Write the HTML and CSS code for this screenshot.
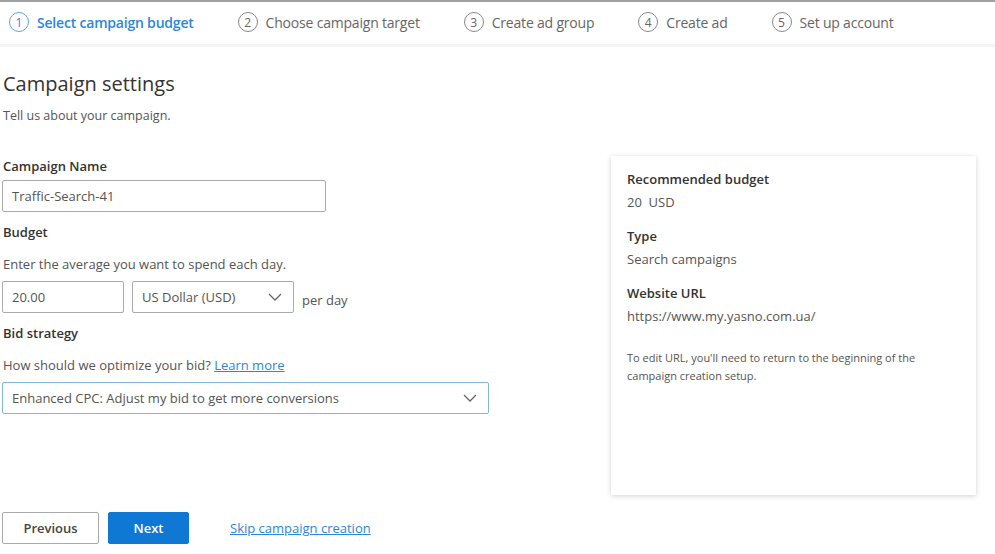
FILE: index.html
```html
<!DOCTYPE html>
<html lang="en">
<head>
  <meta charset="UTF-8">
  <meta name="viewport" content="width=device-width, initial-scale=1.0">
  <title>Campaign settings</title>
  <link rel="stylesheet" href="styles.css">
</head>
<body>
  <div class="steps">
    <div class="step active"><span class="num">1</span>Select campaign budget</div>
    <div class="step"><span class="num">2</span>Choose campaign target</div>
    <div class="step"><span class="num">3</span>Create ad group</div>
    <div class="step"><span class="num">4</span>Create ad</div>
    <div class="step"><span class="num">5</span>Set up account</div>
  </div>

  <div class="page">
    <div class="form">
      <h1>Campaign settings</h1>
      <p class="sub">Tell us about your campaign.</p>

      <label class="label first">Campaign Name</label>
      <div class="field name-field">Traffic-Search-41</div>

      <label class="label">Budget</label>
      <p class="hint">Enter the average you want to spend each day.</p>
      <div class="budget-row">
        <div class="field amount">20.00</div>
        <div class="field select currency">US Dollar (USD)
          <svg class="chev" width="14" height="8" viewBox="0 0 14 8"><path d="M1 1l6 6 6-6" fill="none" stroke="#666" stroke-width="1.3"/></svg>
        </div>
        <span class="per-day">per day</span>
      </div>

      <label class="label">Bid strategy</label>
      <p class="hint">How should we optimize your bid? <a href="#">Learn more</a></p>
      <div class="field select bid">Enhanced CPC: Adjust my bid to get more conversions
        <svg class="chev" width="14" height="8" viewBox="0 0 14 8"><path d="M1 1l6 6 6-6" fill="none" stroke="#666" stroke-width="1.3"/></svg>
      </div>
    </div>

    <div class="card">
      <div class="card-title">Recommended budget</div>
      <div class="card-value">20&nbsp; USD</div>
      <div class="card-title">Type</div>
      <div class="card-value">Search campaigns</div>
      <div class="card-title">Website URL</div>
      <div class="card-value">https://www.my.yasno.com.ua/</div>
      <p class="card-note">To edit URL, you'll need to return to the beginning of the campaign creation setup.</p>
    </div>
  </div>

  <div class="actions">
    <button class="btn">Previous</button>
    <button class="btn primary">Next</button>
    <a href="#" class="skip">Skip campaign creation</a>
  </div>
</body>
</html>
```

FILE: styles.css
```css
body {
  margin: 0;
  font-family: "Open Sans", "Noto Sans", sans-serif;
  color: #333;
  background: #fff;
}
.steps {
  display: flex;
  align-items: center;
  height: 40px;
  padding: 0 0 2px 9px;
  border-top: 2px solid #a0a0a0;
  border-bottom: 3px solid #f4f4f4;
}
.step {
  display: flex;
  align-items: center;
  font-size: 14px;
  color: #666;
  margin-right: 44px;
  letter-spacing: -0.2px;
}
.step .num {
  width: 18px;
  height: 18px;
  border: 1.5px solid #888;
  border-radius: 50%;
  display: flex;
  align-items: center;
  justify-content: center;
  font-size: 12px;
  margin-right: 8px;
  letter-spacing: 0;
}
.step.active {
  color: #2b88d8;
  font-weight: 600;
}
.step.active .num {
  border-color: #5aa6dc;
  font-weight: 400;
}
.page {
  display: flex;
  align-items: flex-start;
}
.form {
  width: 490px;
  padding-left: 2px;
}
h1 {
  font-size: 20px;
  font-weight: 500;
  color: #333;
  margin: 23px 0 0 1px;
  line-height: 28px;
}
.sub {
  font-size: 12.5px;
  color: #555;
  margin: 9px 0 0 1px;
}
.label {
  display: block;
  font-size: 13px;
  font-weight: 600;
  color: #333;
  margin: 11px 0 5px 1px;
}
.label.first {
  margin-top: 33px;
}
.hint {
  font-size: 13px;
  color: #555;
  margin: 14px 0 8px 1px;
}
.hint a {
  color: #2b88d8;
}
.field {
  box-sizing: border-box;
  height: 32px;
  border: 1px solid #aaa;
  border-radius: 2px;
  font-size: 13px;
  color: #555;
  padding: 0 9px;
  display: flex;
  align-items: center;
}
.name-field {
  width: 324px;
}
.budget-row {
  display: flex;
  align-items: center;
  gap: 8px;
}
.amount {
  width: 122px;
}
.select {
  justify-content: space-between;
}
.currency {
  width: 162px;
}
.per-day {
  font-size: 13px;
  color: #555;
  margin-top: 6px;
}
.bid {
  width: 487px;
  border-color: #80b8d8;
}
.chev {
  margin-right: 2px;
}
.card {
  box-sizing: border-box;
  width: 365px;
  height: 339px;
  margin: 109px 19px 0 auto;
  padding: 14px 16px;
  box-shadow: 0 1px 5px rgba(0, 0, 0, 0.18);
}
.card-title {
  font-size: 13px;
  font-weight: 600;
  color: #333;
  margin-top: 16px;
}
.card-title:first-child {
  margin-top: 0;
}
.card-value {
  font-size: 13px;
  color: #555;
  margin-top: 5px;
}
.card-note {
  max-width: 310px;
  font-size: 11px;
  color: #555;
  line-height: 18px;
  margin: 24px 0 0;
}
.actions {
  display: flex;
  align-items: center;
  padding-left: 2px;
  margin-top: 17px;
}
.btn {
  height: 32px;
  width: 97px;
  border: 1px solid #aaa;
  border-radius: 2px;
  background: #fff;
  font-family: inherit;
  font-size: 13px;
  font-weight: 600;
  color: #444;
  margin-right: 9px;
}
.btn.primary {
  width: 81px;
  background: #0f78d4;
  border-color: #0f78d4;
  color: #fff;
  margin-right: 41px;
}
.skip {
  font-size: 13px;
  color: #2b88d8;
}
```
